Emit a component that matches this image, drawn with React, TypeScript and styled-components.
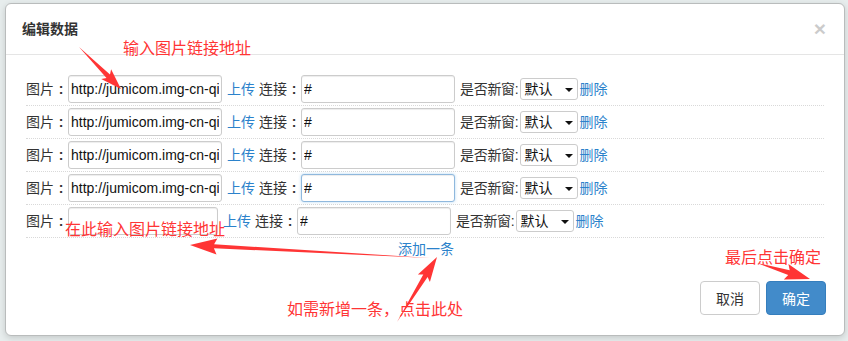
import styled, {createGlobalStyle} from 'styled-components';

const GlobalStyle = createGlobalStyle`
  html, body {
    margin: 0;
    padding: 0;
    background: #e7eded;
  }
  * {
    box-sizing: border-box;
  }
`;

const FONT = `"Liberation Sans", "Noto Sans CJK SC", sans-serif`;
const LINK = '#2b82cb';
const NOTE = '#ff3535';

const Page = styled.div`
  position: relative;
  width: 848px;
  height: 341px;
  padding: 3px 3px 5px 5px;
  font-family: ${FONT};
  font-size: 14px;
  color: #333;
`;

const Modal = styled.div`
  width: 840px;
  height: 333px;
  background: #fff;
  border: 1px solid #b9bcbc;
  border-radius: 6px;
  box-shadow: 0 2px 6px rgba(0, 0, 0, 0.15);
  display: flex;
  flex-direction: column;
`;

const Header = styled.div`
  height: 51px;
  padding: 15px 16px;
  border-bottom: 1px solid #e5e5e5;
  display: flex;
  align-items: center;
  justify-content: space-between;
`;

const Title = styled.h4`
  margin: 0;
  font-size: 14px;
  font-weight: bold;
  line-height: 20px;
  color: #333;
`;

const Close = styled.span`
  font-size: 21px;
  font-weight: bold;
  line-height: 20px;
  color: #000;
  opacity: 0.2;
  margin-right: 2px;
`;

const Body = styled.div`
  padding: 18px 20px 0;
`;

const Row = styled.div`
  display: flex;
  align-items: center;
  height: 33px;
  padding: 2px 0 2px;
  border-bottom: 1px dotted #d9d9d9;
  line-height: 28px;
  white-space: nowrap;
`;

const Label = styled.span`
  display: inline-flex;
  color: #333;
`;

// the full-width colon sits centred in its cell in the original
const Colon = styled.span`
  display: inline-block;
  width: 14px;
  text-align: center;
  font-weight: bold;
`;

const Input = styled.input<{$w: number; $focus?: boolean}>`
  width: ${p => p.$w}px;
  height: 28px;
  margin: 0;
  padding: 0 2px;
  border: 1px solid ${p => (p.$focus ? '#8fb8dd' : '#ccc')};
  border-radius: 3px;
  box-shadow: ${p =>
    p.$focus
      ? 'inset 0 1px 1px rgba(0,0,0,.075), 0 0 3px rgba(102,175,233,.5)'
      : 'inset 0 1px 1px rgba(0,0,0,.075)'};
  outline: none;
  color: #111;
  font-family: ${FONT};
  font-size: 14px;
  line-height: 26px;
`;

const Link = styled.a`
  color: ${LINK};
  text-decoration: none;
  cursor: pointer;
`;

const Upload = styled(Link)`
  margin: 0 4px 0 5px;
`;

const WinLabel = styled.span`
  margin: 0 2px 0 5px;
  letter-spacing: -0.3px;
`;

const Select = styled.div`
  position: relative;
  width: 58px;
  height: 22px;
  border: 1px solid #ccc;
  border-radius: 3px;
  padding-left: 3px;
  line-height: 20px;
  color: #111;
  margin-right: 1px;
  &::after {
    content: '';
    position: absolute;
    right: 4px;
    top: 9px;
    border-left: 4px solid transparent;
    border-right: 4px solid transparent;
    border-top: 4px solid #111;
  }
`;

const AddRow = styled.div`
  margin-top: 1px;
  height: 21px;
  line-height: 20px;
  text-align: center;
  padding-left: 2px;
`;

const Footer = styled.div`
  display: flex;
  justify-content: flex-end;
  gap: 6px;
  padding: 21px 18px 21px;
`;

const Button = styled.button<{$primary?: boolean}>`
  height: 34px;
  padding: 0 15px;
  font-family: ${FONT};
  font-size: 14px;
  border-radius: 4px;
  border: 1px solid ${p => (p.$primary ? '#357ebd' : '#ccc')};
  background: ${p => (p.$primary ? '#428bca' : '#fff')};
  color: ${p => (p.$primary ? '#fff' : '#333')};
`;

const Overlay = styled.svg`
  position: absolute;
  left: 0;
  top: 0;
  pointer-events: none;
`;

const Note = styled.span<{$x: number; $y: number}>`
  position: absolute;
  left: ${p => p.$x}px;
  top: ${p => p.$y}px;
  font-family: "Noto Sans CJK SC", sans-serif;
  font-size: 16px;
  line-height: 18px;
  color: ${NOTE};
  white-space: nowrap;
`;

type RowData = {img: string; imgW: number; focus?: boolean};

const rows: RowData[] = [
  {img: 'http://jumicom.img-cn-qingdao', imgW: 154},
  {img: 'http://jumicom.img-cn-qingdao', imgW: 154},
  {img: 'http://jumicom.img-cn-qingdao', imgW: 154},
  {img: 'http://jumicom.img-cn-qingdao', imgW: 154, focus: true},
  {img: '', imgW: 150},
];

function arrow(x1: number, y1: number, x2: number, y2: number, head = 20, wing = 8, shaft = 4) {
  const len = Math.hypot(x2 - x1, y2 - y1);
  const ux = (x2 - x1) / len;
  const uy = (y2 - y1) / len;
  const px = -uy;
  const py = ux;
  const bx = x2 - ux * head;
  const by = y2 - uy * head;
  const pts = [
    [x1, y1],
    [bx + px * shaft / 2, by + py * shaft / 2],
    [bx - ux * 3 + px * wing, by - uy * 3 + py * wing],
    [x2, y2],
    [bx - ux * 3 - px * wing, by - uy * 3 - py * wing],
    [bx - px * shaft / 2, by - py * shaft / 2],
  ];
  return pts.map(p => p.map(v => v.toFixed(1)).join(',')).join(' ');
}

export default function App() {
  return (
    <>
      <GlobalStyle />
      <Page>
        <Modal>
          <Header>
            <Title>编辑数据</Title>
            <Close>×</Close>
          </Header>
          <Body>
            {rows.map((r, i) => (
              <Row key={i}>
                <Label>
                  图片<Colon>:</Colon>
                </Label>
                <Input $w={r.imgW} readOnly value={r.img} />
                <Upload>上传</Upload>
                <Label>
                  连接<Colon>:</Colon>
                </Label>
                <Input $w={154} $focus={r.focus} readOnly value="#" />
                <WinLabel>是否新窗:</WinLabel>
                <Select>默认</Select>
                <Link>删除</Link>
              </Row>
            ))}
            <AddRow>
              <Link>添加一条</Link>
            </AddRow>
          </Body>
          <Footer>
            <Button>取消</Button>
            <Button $primary>确定</Button>
          </Footer>
        </Modal>

        <Overlay width={848} height={341} viewBox="0 0 848 341">
          <g fill={NOTE}>
            <polygon points={arrow(79, 47, 121, 89, 18, 7, 5)} />
            <polygon points={arrow(430, 258, 190, 245, 24, 8, 4)} />
            <polygon points={arrow(397, 322, 437, 257, 22, 7, 5)} />
            <polygon points={arrow(757, 263, 810, 279, 22, 8, 5)} />
          </g>
        </Overlay>
        <Note $x={123} $y={38}>输入图片链接地址</Note>
        <Note $x={65} $y={219}>在此输入图片链接地址</Note>
        <Note $x={287} $y={299}>如需新增一条，点击此处</Note>
        <Note $x={725} $y={247}>最后点击确定</Note>
      </Page>
    </>
  );
}
